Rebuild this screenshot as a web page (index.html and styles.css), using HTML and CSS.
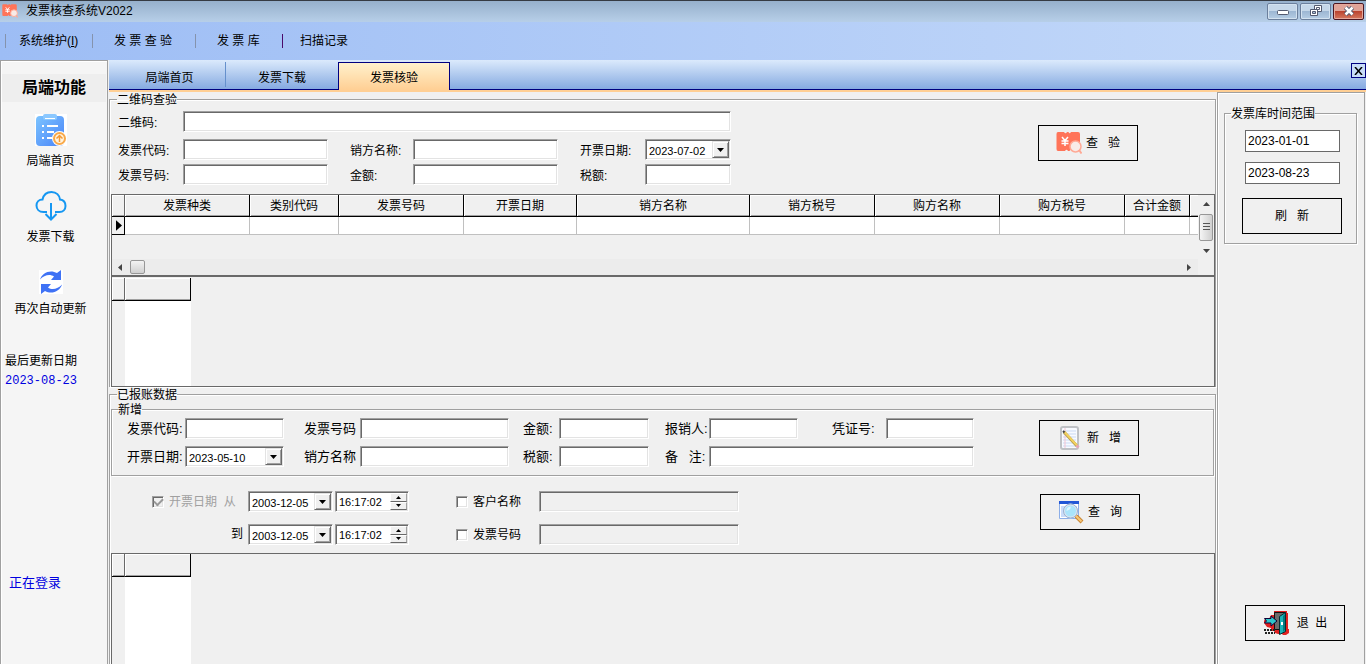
FILE: index.html
```html
<!DOCTYPE html>
<html lang="zh-CN">
<head>
<meta charset="utf-8">
<title>发票核查系统V2022</title>
<link rel="stylesheet" href="styles.css">
</head>
<body>
<svg class="defs" aria-hidden="true">
  <symbol id="ticket" viewBox="0 0 26 24">
    <path fill="#ff7459" d="M2 1h6q1.500 2.500 3 0h1.500q1 2.500 2.500 0H22q2 0 2 2v16q0 1-2 1h-6q-1-2.500-2.500 0H12q-1.500-2.500-3 0H2q-1.500 0-1.500-2V3Q.5 1 2 1z"/>
    <path fill="none" stroke="#fff" stroke-width="1.500" d="M6 6l3 3.500L12 6M9 9v6M5.500 10h7M5.500 12.500h7"/>
    <circle cx="19.500" cy="15.500" r="5.500" fill="#f8ebe7" stroke="#ffa995" stroke-width="1.500"/>
    <path stroke="#ffa995" stroke-width="2" d="M23 19l2.500 3.500"/>
  </symbol>
  <symbol id="down" viewBox="0 0 7 4"><path d="M0 0h7L3.500 4z"/></symbol>
  <symbol id="up" viewBox="0 0 7 4"><path d="M0 4h7L3.500 0z"/></symbol>
</svg>

<header class="titlebar">
  <svg class="app-icon"><use href="#ticket"/></svg>
  <h1 class="app-name">发票核查系统V2022</h1>
  <div class="win-buttons">
    <button class="win" aria-label="最小化"><svg class="min-glyph" width="12" height="6" viewBox="0 0 12 6"><rect x=".5" y=".5" width="11" height="4" rx="1" fill="#fff" stroke="#535a70"/></svg></button>
    <button class="win" aria-label="还原"><svg width="12" height="12" viewBox="0 0 12 12" fill="#fff" stroke="#535a70"><path d="M4.500.5h7v6h-7z"/><path d="M6.500 2.500h3v2h-3z"/><path d="M.5 4.500h7v6h-7z"/><path fill="#a9c0da" d="M2.500 6.500h3v2h-3z"/></svg></button>
    <button class="win win-close" aria-label="关闭"><svg width="12" height="10" viewBox="0 0 12 10"><path d="M2.500 1.500l7 7M9.500 1.500l-7 7" stroke="#535a70" stroke-width="4.500"/><path d="M2.500 1.500l7 7M9.500 1.500l-7 7" stroke="#fff" stroke-width="2.500"/></svg></button>
  </div>
</header>

<nav class="menubar">
  <a class="menu menu-a" href="#">系统维护(<u>I</u>)</a>
  <a class="menu menu-b" href="#">发 票 查 验</a>
  <a class="menu menu-c" href="#">发 票 库</a>
  <a class="menu menu-d" href="#">扫描记录</a>
</nav>

<div class="body">
  <aside class="sidebar">
    <h2 class="side-title">局端功能</h2>
    <button class="side-item">
      <svg width="32" height="32" viewBox="0 0 32 32">
        <defs><linearGradient id="clip" x1="0" y1="0" x2="1" y2="1"><stop offset="0" stop-color="#7cc4ff"/><stop offset="1" stop-color="#4a84f8"/></linearGradient></defs>
        <rect width="32" height="32" fill="#fff"/>
        <rect x="1" y="2" width="28" height="30" rx="4" fill="url(#clip)"/>
        <rect x="8" y="0" width="14" height="6" rx="2" fill="#8bc8ff"/><path stroke="#fff" d="M10 4.500h10"/>
        <path stroke="#fff" stroke-width="2" d="M7 12h2M12 12h11M7 18h2M12 18h7M7 24h2M12 24h5"/>
        <circle cx="24.500" cy="24.500" r="7.500" fill="#fff"/><circle cx="24.500" cy="24.500" r="5.500" fill="#fff3df" stroke="#f8a94a" stroke-width="2"/>
        <path fill="none" stroke="#f59a35" stroke-width="1.500" d="M24.500 28v-6M21.500 24.500l3-3 3 3"/>
      </svg>
      <span>局端首页</span>
    </button>
    <button class="side-item side-cloud">
      <svg width="32" height="32" viewBox="0 0 32 32" fill="none" stroke="#1597f2" stroke-width="2">
        <path d="M12 22H8.500C4 22 1.500 19 1.500 15.500S4 9.500 7.500 9.500C8.500 5 12 2 16.500 2c5 0 8 3.500 8.500 7.500 3.500.5 5.500 3 5.500 6.500 0 3.500-2.500 6-6 6H20"/><path d="M16 13v16M10.500 24l5.500 5.500 5.500-5.500"/>
      </svg>
      <span>发票下载</span>
    </button>
    <button class="side-item side-refresh">
      <svg width="24" height="24" viewBox="0 0 24 24" fill="#3f72f5">
        <path fill="#fff" d="M0 0h24v24H0z"/>
        <path d="M1 9.500C3 3 11-1 18 3l4-3v10H12l3-3.500C11 3.500 5 5 1 9.500z"/><path d="M23 14.500C21 21 13 25 6 21l-4 3V14h10l-3 3.500c4 3 10 1.500 14-3z"/>
      </svg>
      <span>再次自动更新</span>
    </button>
    <div class="updated"><span>最后更新日期</span><time>2023-08-23</time></div>
    <p class="login-state">正在登录</p>
  </aside>

  <main class="work">
    <div class="tabs" role="tablist">
      <button class="tab tab-divided" role="tab">局端首页</button>
      <button class="tab" role="tab">发票下载</button>
      <button class="tab tab-active" role="tab" aria-selected="true">发票核验</button>
      <button class="tab-close" aria-label="关闭标签页"><svg width="9" height="8" viewBox="0 0 9 8"><path d="M1 0l7 8M8 0L1 8" stroke="#000" stroke-width="1.500"/></svg></button>
    </div>

    <div class="panes">
      <div class="center">
        <fieldset class="group check-group">
          <legend>二维码查验</legend>
          <div class="form-row">
            <div class="check-form">
              <label for="qr">二维码:</label><input class="field wide" id="qr" type="text">
              <label for="code">发票代码:</label><input class="field" id="code" type="text">
              <label class="second" for="seller">销方名称:</label><input class="field" id="seller" type="text">
              <label class="second" for="date">开票日期:</label>
              <div class="field combo"><select id="date"><option>2023-07-02</option></select><span class="drop"><svg width="7" height="4"><use href="#down"/></svg></span></div>
              <label for="no">发票号码:</label><input class="field" id="no" type="text">
              <label class="second" for="amount">金额:</label><input class="field" id="amount" type="text">
              <label class="second" for="tax">税额:</label><input class="field" id="tax" type="text">
            </div>
            <button class="action check-action"><svg width="26" height="24"><use href="#ticket"/></svg><span>查&nbsp;&nbsp; 验</span></button>
          </div>

          <div class="datagrid">
            <div class="grid-top">
              <div class="grid-view">
                <table class="records">
                  <colgroup><col class="w-mark"><col class="w-m"><col class="w-s"><col class="w-m"><col class="w-d"><col class="w-l"><col class="w-m"><col class="w-m"><col class="w-m"><col class="w-x"><col></colgroup>
                  <thead><tr><th class="mark"></th><th>发票种类</th><th>类别代码</th><th>发票号码</th><th>开票日期</th><th>销方名称</th><th>销方税号</th><th>购方名称</th><th>购方税号</th><th>合计金额</th><th></th></tr></thead>
                  <tbody><tr><td class="pointer"><svg width="6" height="11" viewBox="0 0 7 12"><path d="M0 0v12l7-6z"/></svg></td><td></td><td></td><td></td><td></td><td></td><td></td><td></td><td></td><td></td><td></td></tr></tbody>
                </table>
              </div>
              <div class="vscroll">
                <svg width="7" height="4"><use href="#up"/></svg>
                <span class="vthumb"><svg width="7" height="9" viewBox="0 0 7 9" stroke="#555"><path d="M0 .5h7M0 3.500h7M0 6.500h7"/></svg></span>
                <svg width="7" height="4"><use href="#down"/></svg>
              </div>
            </div>
            <div class="hscroll">
              <svg width="4" height="7" viewBox="0 0 4 7"><path d="M4 0v7L0 3.500z"/></svg>
              <span class="hthumb"></span>
              <svg class="right-arrow" width="4" height="7" viewBox="0 0 4 7"><path d="M0 0v7l4-3.500z"/></svg>
            </div>
          </div>
          <div class="emptygrid detail">
            <div class="eg-mark"></div><div class="eg-col"></div>
          </div>
        </fieldset>

        <fieldset class="group saved-group">
          <legend>已报账数据</legend>
          <fieldset class="group add-group">
            <legend>新增</legend>
            <div class="form-row">
              <div class="add-form">
                <label for="a1">发票代码:</label><input class="field" id="a1" type="text">
                <label class="second" for="a2">发票号码</label><input class="field" id="a2" type="text">
                <label class="third" for="a3">金额:</label><input class="field" id="a3" type="text">
                <label class="fourth" for="a4">报销人:</label><input class="field" id="a4" type="text">
                <label class="fifth" for="a5">凭证号:</label><input class="field" id="a5" type="text">
                <label for="b1">开票日期:</label>
                <div class="field combo"><select id="b1"><option>2023-05-10</option></select><span class="drop"><svg width="7" height="4"><use href="#down"/></svg></span></div>
                <label class="second" for="b2">销方名称</label><input class="field" id="b2" type="text">
                <label class="third" for="b3">税额:</label><input class="field" id="b3" type="text">
                <label class="fourth" for="b4">备&nbsp;&nbsp; 注:</label><input class="field remark" id="b4" type="text">
              </div>
              <button class="action add-action">
                <svg width="26" height="26" viewBox="0 0 26 26"><rect x="4" y="2" width="17" height="22" rx="2" fill="#f8faff" stroke="#bfc1c5" stroke-width="2"/><path stroke="#c9d9f3" d="M6 6h13M6 9h13M6 12h13M6 15h13M6 18h13M6 21h13"/><path stroke="#f3c4d2" d="M8 3v20"/><path stroke="#b39a4a" stroke-width="3" d="M7 7l13 14"/><path stroke="#f2d160" stroke-width="2" d="M7.500 7L20 20.500"/><path stroke="#e5a4b4" stroke-width="3" d="M19.500 20.500l2 2"/><path stroke="#444" stroke-width="2" d="M6 6l1.500 1.500"/></svg>
                <span>新&nbsp;&nbsp; 增</span>
              </button>
            </div>
          </fieldset>

          <div class="form-row">
            <div class="filter-form">
              <label class="check muted"><input type="checkbox" checked disabled>开票日期&nbsp; 从</label>
              <div class="field combo"><select aria-label="开始日期"><option>2003-12-05</option></select><span class="drop"><svg width="7" height="4"><use href="#down"/></svg></span></div>
              <div class="field spin"><input type="text" value="16:17:02" aria-label="开始时间"><span class="steps"><button aria-label="增加"><svg width="5" height="3"><use href="#up"/></svg></button><button aria-label="减少"><svg width="5" height="3"><use href="#down"/></svg></button></span></div>
              <label class="check opt"><input type="checkbox">客户名称</label>
              <input class="field" type="text" aria-label="客户名称" disabled>
              <label class="to" for="to">到</label>
              <div class="field combo"><select id="to"><option>2003-12-05</option></select><span class="drop"><svg width="7" height="4"><use href="#down"/></svg></span></div>
              <div class="field spin"><input type="text" value="16:17:02" aria-label="结束时间"><span class="steps"><button aria-label="增加"><svg width="5" height="3"><use href="#up"/></svg></button><button aria-label="减少"><svg width="5" height="3"><use href="#down"/></svg></button></span></div>
              <label class="check opt"><input type="checkbox">发票号码</label>
              <input class="field" type="text" aria-label="发票号码" disabled>
            </div>
            <button class="action query-action">
              <svg width="26" height="26" viewBox="0 0 26 26"><path fill="#fff" stroke="#8caee8" d="M1.500 2.500h19v17h-19z"/><path fill="#2257d6" d="M1 2h20v3H1z"/><path fill="#c9dcfa" d="M3 7h16v11H3z"/><circle cx="12.500" cy="12" r="6.500" fill="#a9e4fb" stroke="#dce6f2" stroke-width="2"/><circle cx="12.500" cy="12" r="7" fill="none" stroke="#86a3c7" stroke-width=".8"/><path fill="#dff7ff" d="M8.500 12q0-4 4-4.500 1 3-4 4.500z"/><path stroke="#c98532" stroke-width="4" d="M18 17l6 6"/><path stroke="#f7c877" stroke-width="2" d="M18 17l5.500 5.500"/></svg>
              <span>查&nbsp;&nbsp; 询</span>
            </button>
          </div>
          <div class="emptygrid results">
            <div class="eg-mark"></div><div class="eg-col"></div>
          </div>
        </fieldset>
      </div>

      <aside class="rightpane">
        <fieldset class="group range-group">
          <legend>发票库时间范围</legend>
          <input class="plain" type="text" value="2023-01-01" aria-label="开始日期">
          <input class="plain" type="text" value="2023-08-23" aria-label="结束日期">
          <button class="action"><span>刷&nbsp;&nbsp; 新</span></button>
        </fieldset>
        <button class="action exit-action">
          <svg width="26" height="26" viewBox="0 0 26 26"><path fill="#e02020" d="M11 1h13v2h1v16h1v4l-3 2h-3l-1-1h-4l-3-1-1-2H8v-3l-4-1-3-4v-2l1-2h4l2-4h3z"/><path fill="#6b6b6b" stroke="#111" d="M11.500 2.500h11v17h-11z"/><path fill="#19b3b8" stroke="#032f33" d="M16.500 6.500l6-4v19l-6 3z"/><path fill="#067a80" d="M20 6l2-2v16l-2 2z"/><path fill="#fff" d="M18 12h2v3h-2z"/><path fill="#2cc6cb" stroke="#103" d="M1.500 8.500H8V6l6 5-6 5v-3H1.500l2-2z"/><path stroke="#222" stroke-width="2" stroke-dasharray="2 1" d="M1 20h11M2 23h10"/></svg>
          <span>退&nbsp; 出</span>
        </button>
      </aside>
    </div>
  </main>
</div>
</body>
</html>
```
FILE: styles.css
```css
* { box-sizing: border-box; }

body {
  margin: 0;
  height: 100vh;
  overflow: hidden;
  display: flex;
  flex-direction: column;
  background: #f0f0f0;
  color: #000;
  font: 12px/20px "Liberation Sans", "Noto Sans CJK SC", sans-serif;
}

button, input, select { font: inherit; color: inherit; margin: 0; padding: 0; border-radius: 0; }
h1, h2, p { margin: 0; font-weight: normal; }
svg { display: block; flex: none; }
.defs { position: absolute; width: 0; height: 0; }

/* title bar */
.titlebar {
  height: 22px;
  flex: none;
  display: flex;
  align-items: center;
  padding: 0 2px 1px;
  border-top: 1px solid #353b43;
  background: linear-gradient(#96b0cc, #b7cfe8);
}
.app-icon { width: 16px; height: 16px; }
.app-name { font-size: 12px; margin-left: 8px; }
.win-buttons { margin-left: auto; display: flex; gap: 2px; }
.win {
  width: 31px;
  height: 17px;
  display: flex;
  align-items: center;
  justify-content: center;
  border: 1px solid #6b7f9c;
  border-radius: 2px;
  background: linear-gradient(#c5d7e9 45%, #9db7d3 50%, #b6cde4);
  box-shadow: inset 0 0 0 1px #d3e2f0;
}
.min-glyph { margin-top: 4px; }
.win-close {
  border-color: #4c1621;
  background: linear-gradient(#e0a398 45%, #bb4430 50%, #d5785f);
  box-shadow: inset 0 0 0 1px #e5a89c;
}

/* menu */
.menubar {
  height: 38px;
  flex: none;
  display: flex;
  align-items: center;
  padding-left: 5px;
  background: linear-gradient(90deg, #9dbdf5, #c5daf9);
}
.menu {
  color: #000;
  text-decoration: none;
  border-left: 1px solid #8593ad;
  line-height: 14px;
}
.menu-a { width: 87px; padding-left: 13px; }
.menu-b { width: 103px; padding-left: 21px; }
.menu-c { width: 87px; padding-left: 21px; }
.menu-d { padding-left: 17px; border-color: #4a0a6a; }

.body { flex: 1; min-height: 0; display: flex; }

/* sidebar */
.sidebar {
  width: 108px;
  flex: none;
  display: flex;
  flex-direction: column;
  border: 1px solid #a0a0a0;
  border-bottom: 0;
  background: #f5f5f5;
  box-shadow: inset 1px 1px #fff;
}
.side-title {
  margin: 13px 1px 0;
  height: 28px;
  line-height: 28px;
  text-align: center;
  font-size: 16px;
  font-weight: bold;
  background: #eee;
}
.side-item {
  display: flex;
  flex-direction: column;
  align-items: center;
  gap: 5px;
  width: 99px;
  margin-top: 12px;
  border: 0;
  background: none;
}
.side-cloud { margin-top: 19px; }
.side-refresh { margin-top: 23px; }
.updated { margin-top: 32px; padding-left: 4px; display: flex; flex-direction: column; }
.updated time { color: #0000e0; font-family: "Liberation Mono", monospace; }
.login-state { margin: auto 0 71px 8px; color: #0000e0; font-size: 13px; }

/* tabs */
.work { flex: 1; min-width: 0; display: flex; flex-direction: column; padding-left: 1px; }
.tabs {
  height: 32px;
  flex: none;
  display: flex;
  align-items: stretch;
  padding-top: 2px;
  border-bottom: 2px solid #ffcf94;
  background: linear-gradient(#dbeafc, #83a8e0);
  box-shadow: inset 0 -1px #000080;
}
.tab {
  width: 112px;
  padding-top: 3px;
  border: 0;
  background: none;
}
.tab-divided {
  width: 117px;
  padding-left: 5px;
  border-right: 1px solid #fff;
  border-image: linear-gradient(#6590cc 85%, transparent 85%) 1;
  border-width: 0 1px 0 0;
}
.tab-active {
  border: 1px solid #000080;
  border-bottom: 0;
  background: linear-gradient(#fff1cc, #ffcf94);
}
.tab-close {
  width: 15px;
  height: 15px;
  margin: 1px 0 0 auto;
  display: flex;
  align-items: center;
  justify-content: center;
  border: 1px solid #000080;
  background: #c9ddf8;
}

.panes { flex: 1; min-height: 0; display: flex; }
.center { flex: 1; min-width: 0; display: flex; flex-direction: column; padding-right: 1px; }

/* etched group boxes */
.group {
  margin: 0;
  min-width: 0;
  border: 1px solid #a0a0a0;
  box-shadow: 1px 1px #fff, inset 1px 1px #fff;
}
.group legend { padding: 0; line-height: 14px; height: 12px; margin-left: 6px; }
.check-group { margin-top: 1px; padding: 0 0 0 1px; border-bottom: 0; }
.saved-group {
  flex: 1;
  min-height: 0;
  margin-top: 1px;
  padding: 3px 0 0 1px;
  border-bottom: 0;
  display: flex;
  flex-direction: column;
}

.form-row { display: flex; justify-content: space-between; align-items: flex-start; }

/* sunken controls */
.field {
  width: 100%;
  height: 21px;
  padding: 0 3px;
  border: 1px solid;
  border-color: #a0a0a0 #fff #fff #a0a0a0;
  background: #fff;
  box-shadow: inset 1px 1px #696969, inset -1px -1px #e3e3e3;
}
input.field:disabled { background: #f0f0f0; }
.combo, .spin { display: flex; padding: 1px; font-size: 11px; }
.combo select {
  flex: 1;
  min-width: 0;
  padding-left: 2px;
  border: 0;
  appearance: none;
  background: none;
}
.drop {
  width: 17px;
  display: flex;
  align-items: center;
  justify-content: center;
  border: 1px solid;
  border-color: #e3e3e3 #696969 #696969 #e3e3e3;
  background: #f0f0f0;
  box-shadow: inset 1px 1px #fff, inset -1px -1px #a0a0a0;
}
.spin input { flex: 1; min-width: 0; border: 0; padding-left: 2px; background: none; }
.steps { width: 17px; display: flex; flex-direction: column; }
.steps button {
  flex: 1;
  display: flex;
  align-items: center;
  justify-content: center;
  border: 1px solid;
  border-color: #fff #a0a0a0 #696969 #fff;
  background: #f0f0f0;
}

.action {
  width: 100px;
  height: 36px;
  flex: none;
  display: flex;
  align-items: center;
  justify-content: center;
  gap: 4px;
  border: 1px solid #000;
  background: #f0f0f0;
}
.check-action { margin: 20px 77px 0 0; }
.add-action { margin: 2px 74px 0 0; }
.query-action { margin: 18px 75px 0 0; }

.check-form {
  display: grid;
  grid-template-columns: 65px 145px 85px 145px 87px 86px;
  grid-template-rows: 28px 25px 24px;
  padding: 6px 0 6px 7px;
}
.check-form label { line-height: 24px; }
.check-form .second { padding-left: 22px; }
.check-form .wide { grid-column: 2 / -1; }

.add-group { padding: 0 0 8px; margin-right: 1px; }
.add-group .form-row { padding-top: 3px; }
.add-form {
  display: grid;
  grid-template-columns: 58px 99px 76px 149px 50px 90px 60px 89px 88px 88px;
  row-gap: 7px;
  padding-left: 15px;
  font-size: 13px;
}
.add-form label { line-height: 22px; height: 21px; }
.add-form .combo { font-size: 11px; }
.add-form .second { padding-left: 20px; }
.add-form .third { padding-left: 14px; }
.add-form .fourth { padding-left: 16px; }
.add-form .fifth { padding-left: 34px; }
.add-form .remark { grid-column: 8 / -1; }

.filter-form {
  display: grid;
  grid-template-columns: 96px 85px 76px 130px 200px;
  row-gap: 12px;
  padding: 15px 0 8px 41px;
}
.filter-form .spin { width: 74px; margin-left: 2px; }
.check { display: flex; align-items: center; gap: 5px; }
.check.opt { padding-left: 47px; }
.check input {
  width: 12px;
  height: 12px;
  flex: none;
  appearance: none;
  border: 1px solid;
  border-color: #a0a0a0 #fff #fff #a0a0a0;
  background: #fff;
  box-shadow: inset 1px 1px #696969, inset -1px -1px #e3e3e3;
}
.check input:checked {
  background: #f0f0f0;
  display: grid;
  place-items: center;
}
.check input:checked::before {
  content: "";
  width: 7px;
  height: 4px;
  margin-bottom: 2px;
  border: solid #999;
  border-width: 0 0 2px 2px;
  transform: rotate(-45deg);
}
.muted { color: #a0a0a0; }
.to { text-align: right; padding-right: 5px; }

/* record grid */
.datagrid {
  border: 1px solid #696969;
  border-bottom-width: 2px;
}
.grid-top { display: flex; height: 64px; }
.grid-view { flex: 1; min-width: 0; overflow: hidden; }
.records { width: 100%; table-layout: fixed; border-collapse: separate; border-spacing: 0; }
.w-mark { width: 13px; }
.w-s { width: 89px; }
.w-m { width: 125px; }
.w-d { width: 113px; }
.w-l { width: 173px; }
.w-x { width: 65px; }
.records th {
  height: 22px;
  padding: 1px 0 0;
  font-weight: normal;
  line-height: 20px;
  border-right: 1px solid #000;
  border-bottom: 1px solid #000;
  box-shadow: inset 1px 1px #fff, inset 0 -1px #a0a0a0;
}
.records th.mark { border-right-color: #696969; }
.records td {
  height: 18px;
  padding: 0;
  background: #fff;
  border-right: 1px solid #c0c0c0;
  border-bottom: 1px solid #c0c0c0;
}
.records .pointer { padding-left: 4px; background: #f0f0f0; border-color: #000; }
.records th:last-child, .records td:last-child { border-right: 0; }
.vscroll {
  width: 16px;
  display: flex;
  flex-direction: column;
  align-items: center;
  justify-content: space-between;
  padding: 7px 0 6px;
  background: #f0f0f0;
  fill: #444;
}
.vthumb {
  width: 14px;
  height: 27px;
  display: flex;
  align-items: center;
  justify-content: center;
  border: 1px solid #979797;
  border-radius: 2px;
  background: linear-gradient(90deg, #f5f5f5, #cfcfcf);
}
.hscroll {
  height: 16px;
  margin-right: 16px;
  display: flex;
  align-items: center;
  padding: 0 7px 0 6px;
  background: #ececec;
  fill: #444;
}
.hthumb {
  width: 15px;
  height: 14px;
  margin-left: 8px;
  border: 1px solid #979797;
  border-radius: 2px;
  background: linear-gradient(#f3f3f3, #d0d0d0);
}
.right-arrow { margin-left: auto; }

.emptygrid {
  display: flex;
  border: 1px solid #696969;
  box-shadow: 0 1px #fff;
}
.detail { height: 110px; border-top-width: 0; padding-top: 1px; }
.results { flex: 1; min-height: 0; border-bottom: 0; }
.eg-mark::before, .eg-col::before {
  content: "";
  display: block;
  height: 22px;
  background: #f0f0f0;
  border-right: 1px solid #696969;
  border-bottom: 1px solid #000;
  box-shadow: inset 1px 1px #fff, inset 0 -1px #a0a0a0;
}
.eg-mark { width: 13px; }
.eg-col { width: 66px; background: linear-gradient(#f0f0f0 22px, #fff 22px); }
.eg-col::before { border-right-color: #000; width: 65px; }

/* right pane */
.rightpane {
  width: 148px;
  flex: none;
  display: flex;
  flex-direction: column;
  justify-content: space-between;
  padding: 14px 7px 23px 6px;
  border: 1px solid #a0a0a0;
  border-bottom: 0;
  margin-right: 1px;
  box-shadow: inset 1px 1px #fff;
}
.range-group { display: flex; flex-direction: column; padding: 11px 14px 9px 17px; }
.range-group legend { margin-left: -11px; }
.plain {
  width: 95px;
  height: 22px;
  margin: 0 0 10px 3px;
  padding: 0 0 0 2px;
  border: 1px solid #696969;
  background: #fff;
}
.range-group .action { margin-top: 4px; }
.exit-action { align-self: flex-end; margin-right: 12px; gap: 8px; }
```
